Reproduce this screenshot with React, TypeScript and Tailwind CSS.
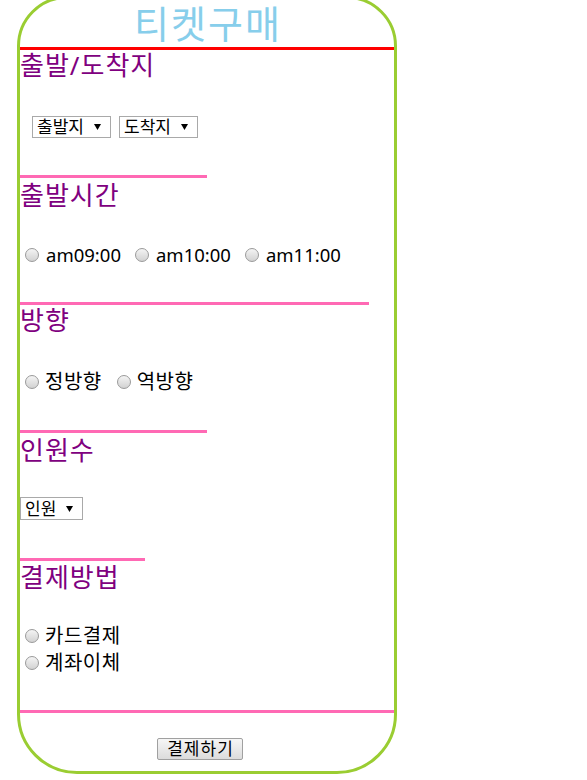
import React from 'react';

const FONT = { fontFamily: '"Noto Sans", "Noto Sans CJK KR", sans-serif' };

function Heading({ children, className = '' }: { children: React.ReactNode; className?: string }) {
  return <h3 className={`text-[26px] leading-[30px] tracking-[1px] text-[#800080] ${className}`}>{children}</h3>;
}

function Divider({ className = '' }: { className?: string }) {
  return <div className={`h-[3px] bg-[#ff69b4] ${className}`} />;
}

function FakeSelect({ label, className = '' }: { label: string; className?: string }) {
  return (
    <div
      className={`flex items-center justify-between border border-[#a9a9a9] bg-white pl-[4px] pr-[9px] text-[17px] leading-[20px] text-black ${className}`}
    >
      <span>{label}</span>
      <svg width="7" height="6" viewBox="0 0 7 6">
        <path d="M0 0 H7 L3.5 6 Z" fill="#000" />
      </svg>
    </div>
  );
}

function Radio({ label, hangul, className = '' }: { label: string; hangul?: boolean; className?: string }) {
  return (
    <label className={`flex items-center ${className}`}>
      <span className="h-[14px] w-[14px] rounded-full border border-[#9a9a9a] bg-linear-to-b from-[#f4f4f4] to-[#d2d2d2]" />
      <span className={hangul ? 'ml-[6px] text-[20px] tracking-[0.5px]' : 'ml-[7px] text-[18.5px]'}>{label}</span>
    </label>
  );
}

export default function App() {
  return (
    <div className="min-h-[780px] bg-white" style={FONT}>
      <div className="-mt-[4px] ml-[17px] w-[380px] rounded-t-[50px] rounded-b-[60px] border-[3px] border-[#9acd32] pb-[11px]">
        <h1 className="h-[48px] pl-[2px] text-center text-[38px] leading-[48px] tracking-[2px] text-[#87ceeb]">티켓구매</h1>
        <div className="h-[3px] bg-[#ff0000]" />

        {/* 출발/도착지 */}
        <Heading>출발/도착지</Heading>
        <div className="mt-[36px] flex">
          <FakeSelect label="출발지" className="ml-[12px] h-[22px] w-[79px]" />
          <FakeSelect label="도착지" className="ml-[8px] h-[22px] w-[79px]" />
        </div>
        <Divider className="mt-[37px] w-[187px]" />

        {/* 출발시간 */}
        <Heading className="mt-[2px]">출발시간</Heading>
        <div className="mt-[33px] flex h-[24px] items-center pl-[5px] leading-[24px] text-black">
          <Radio label="am09:00" />
          <Radio label="am10:00" className="ml-[14px]" />
          <Radio label="am11:00" className="ml-[14px]" />
        </div>
        <Divider className="mt-[35px] w-[349px]" />

        {/* 방향 */}
        <Heading>방향</Heading>
        <div className="mt-[35px] flex h-[24px] items-center pl-[5px] leading-[24px] text-black">
          <Radio label="정방향" hangul />
          <Radio label="역방향" hangul className="ml-[15px]" />
        </div>
        <Divider className="mt-[36px] w-[187px]" />

        {/* 인원수 */}
        <Heading className="mt-[2px]">인원수</Heading>
        <div className="mt-[32px] flex">
          <FakeSelect label="인원" className="h-[23px] w-[63px]" />
        </div>
        <Divider className="mt-[38px] w-[125px]" />

        {/* 결제방법 */}
        <Heading className="mt-[1px]">결제방법</Heading>
        <div className="mt-[32px] flex flex-col pl-[5px] leading-[24px] text-black">
          <Radio label="카드결제" hangul className="h-[24px]" />
          <Radio label="계좌이체" hangul className="mt-[3px] h-[24px]" />
        </div>
        <Divider className="mt-[35px] w-full" />

        <button className="ml-[137px] mt-[25px] flex h-[22px] w-[86px] items-center justify-center rounded-[2px] border border-[#a0a0a0] bg-linear-to-b from-[#f6f6f6] to-[#dcdcdc] pl-[1px] text-[17px] leading-[20px] tracking-[1px] text-black">
          결제하기
        </button>
      </div>
    </div>
  );
}
